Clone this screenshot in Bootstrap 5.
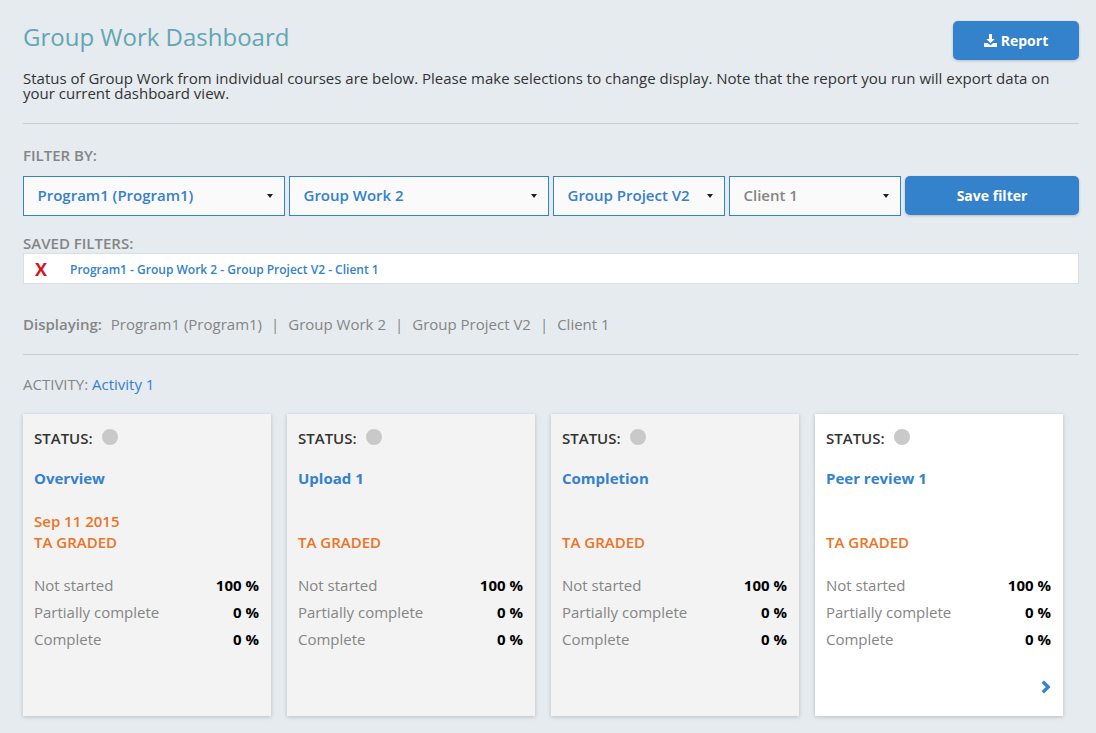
<!doctype html>
<html lang="en"><head><meta charset="utf-8"><title>Group Work Dashboard</title>
<link href="https://cdn.jsdelivr.net/npm/bootstrap@5.3.0/dist/css/bootstrap.min.css" rel="stylesheet">
<style>
html,body{height:733px;overflow:hidden}
body{background:#e6ebef;font-family:"Open Sans",sans-serif;color:#333;font-size:15px}
.pagewrap{padding:20px 17px 0 23px}
.pagetitle{font-size:24px;font-weight:400;color:#64a5b5;line-height:33px;margin:0}
.btn-main{background:#3481cc;color:#fff;border:0;border-radius:5px;font-weight:700;font-size:14px;box-shadow:0 1px 3px rgba(0,0,0,.2);height:39px}
.btn-report{width:126px;margin-top:1px}
.intro{font-size:15px;line-height:15px;margin:11px 0 0;color:#333}
.rule{border-top:1px solid #c9ced2;opacity:1;margin:0}
.rule-a{margin-top:22px}
.flabel{font-size:15px;line-height:19px;font-weight:600;color:#858585;text-transform:uppercase;margin:0}
.picker{height:40px;border:1px solid #3481cc;background:#fafafa;padding:0 14px 2px 13.5px;font-size:15px;font-weight:600;color:#3481cc;display:flex;align-items:center;justify-content:space-between;width:100%}
.picker::after{content:"";border:3px solid transparent;border-top:4px solid #222;border-bottom:0;margin:2px -3px 0 0}
.picker.muted-pick{color:#858585}
.pw1{width:262px}.pw2{width:260px}.pw3{width:172px}.pw4{width:172px}.pw5{width:174px}
.pickers{gap:4px;margin-top:11px}
.savedbox{background:#fff;border:1px solid #dcdfe2;height:31px;padding-left:11px}
.savedx{color:#d4141f;font-weight:700;font-size:18px;width:35px;line-height:1}
.savedlink{font-size:12px;font-weight:600;color:#3481cc;text-decoration:none;padding-top:2px}
.displayrow{font-size:15px;color:#858585;margin-top:31px;line-height:19px}
.displayrow b{font-weight:600;margin-right:5px}
.sep{margin:0 9px}
.activity{font-size:15px;color:#858585;line-height:19px;margin-top:20px}
.activity a{color:#3481cc;text-decoration:none}
.tiles{gap:16px;margin-top:20px}
.tile{width:248px;height:302px;background:#f3f3f3;box-shadow:0 1px 4px rgba(0,0,0,.2);padding:14px 12px 0 11px;position:relative}
.tile.active-tile{background:#fff}
.statusline{font-size:15px;font-weight:600;color:#333;line-height:20px;gap:9px}
.dot{width:16px;height:16px;border-radius:50%;background:#c9c9c9;display:inline-block;margin-top:-2px}
.tilelink{display:block;font-size:15px;font-weight:700;color:#3481cc;text-decoration:none;line-height:20px;margin-top:20px}
.dateline,.graded{font-size:15px;font-weight:600;color:#ec7424;line-height:21px}
.dateline{height:21px;margin-top:23px}
.statlist{margin-top:19px}
.statrow{font-size:15px;line-height:27px;color:#858585}
.statrow b{color:#000;font-weight:700}
.nextarrow{position:absolute;right:12px;bottom:22px;display:block;line-height:0}
</style></head>
<body>
<main class="pagewrap">
<div class="d-flex justify-content-between align-items-start">
  <h1 class="pagetitle">Group Work Dashboard</h1>
  <button class="btn btn-main btn-report d-flex align-items-center justify-content-center gap-1 p-0" type="button"><svg width="13" height="13" viewBox="0 0 13 13" aria-hidden="true"><path fill="#fff" d="M5 0h3v5h2.600L6.500 9.200 2.400 5H5zM0 9h3.600l2.900 2.200L9.400 9H13v4H0z"/></svg>Report</button>
</div>
<p class="intro">Status of Group Work from individual courses are below. Please make selections to change display. Note that the report you run will export data on your current dashboard view.</p>
<hr class="rule rule-a">
<p class="flabel" style="margin-top:22px">Filter by:</p>
<div class="d-flex pickers">
  <div class="pw1"><div class="picker">Program1 (Program1)</div></div>
  <div class="pw2"><div class="picker">Group Work 2</div></div>
  <div class="pw3"><div class="picker">Group Project V2</div></div>
  <div class="pw4"><div class="picker muted-pick">Client 1</div></div>
  <div class="pw5"><button class="btn btn-main w-100 p-0" type="button">Save filter</button></div>
</div>
<p class="flabel" style="margin-top:18px">Saved filters:</p>
<div class="savedbox d-flex align-items-center">
  <span class="savedx">X</span><a class="savedlink" href="#">Program1 - Group Work 2 - Group Project V2 - Client 1</a>
</div>
<div class="displayrow"><b>Displaying:</b> Program1 (Program1)<span class="sep">|</span>Group Work 2<span class="sep">|</span>Group Project V2<span class="sep">|</span>Client 1</div>
<hr class="rule" style="margin-top:20px">
<div class="activity">ACTIVITY: <a href="#">Activity 1</a></div>
<div class="d-flex tiles">
  <article class="tile">
    <div class="statusline d-flex align-items-center">STATUS: <span class="dot"></span></div>
    <a class="tilelink" href="#">Overview</a>
    <div class="dateline">Sep 11 2015</div><div class="graded">TA GRADED</div>
    <div class="statlist">
      <div class="statrow d-flex justify-content-between"><span>Not started</span><b>100 %</b></div>
      <div class="statrow d-flex justify-content-between"><span>Partially complete</span><b>0 %</b></div>
      <div class="statrow d-flex justify-content-between"><span>Complete</span><b>0 %</b></div>
    </div>
  </article>
  <article class="tile">
    <div class="statusline d-flex align-items-center">STATUS: <span class="dot"></span></div>
    <a class="tilelink" href="#">Upload 1</a>
    <div class="dateline"></div><div class="graded">TA GRADED</div>
    <div class="statlist">
      <div class="statrow d-flex justify-content-between"><span>Not started</span><b>100 %</b></div>
      <div class="statrow d-flex justify-content-between"><span>Partially complete</span><b>0 %</b></div>
      <div class="statrow d-flex justify-content-between"><span>Complete</span><b>0 %</b></div>
    </div>
  </article>
  <article class="tile">
    <div class="statusline d-flex align-items-center">STATUS: <span class="dot"></span></div>
    <a class="tilelink" href="#">Completion</a>
    <div class="dateline"></div><div class="graded">TA GRADED</div>
    <div class="statlist">
      <div class="statrow d-flex justify-content-between"><span>Not started</span><b>100 %</b></div>
      <div class="statrow d-flex justify-content-between"><span>Partially complete</span><b>0 %</b></div>
      <div class="statrow d-flex justify-content-between"><span>Complete</span><b>0 %</b></div>
    </div>
  </article>
  <article class="tile active-tile">
    <div class="statusline d-flex align-items-center">STATUS: <span class="dot"></span></div>
    <a class="tilelink" href="#">Peer review 1</a>
    <div class="dateline"></div><div class="graded">TA GRADED</div>
    <div class="statlist">
      <div class="statrow d-flex justify-content-between"><span>Not started</span><b>100 %</b></div>
      <div class="statrow d-flex justify-content-between"><span>Partially complete</span><b>0 %</b></div>
      <div class="statrow d-flex justify-content-between"><span>Complete</span><b>0 %</b></div>
    </div>
    <a class="nextarrow" href="#" aria-label="Next"><svg width="10" height="14" viewBox="0 0 10 14"><path d="M1.800 1.600 7.200 7 1.800 12.400" fill="none" stroke="#3481cc" stroke-width="3.400"/></svg></a>
  </article>
</div>
</main>
</body></html>
